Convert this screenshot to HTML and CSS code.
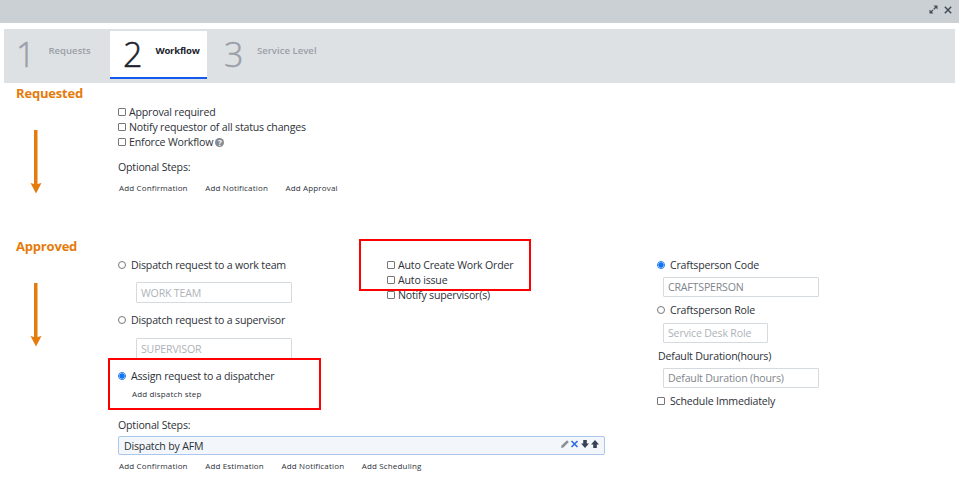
FILE: index.html
```
<!DOCTYPE html>
<html lang="en">
<head>
<meta charset="utf-8">
<title>Workflow</title>
<link rel="stylesheet" href="styles.css">
</head>
<body>
<header class="titlebar">
  <svg width="9" height="9" viewBox="0 0 9 9"><path d="M4.500 .5h4V4.500zM.5 4.500v4H4.500z" fill="#454d59"/><path d="M2 7l5-5" stroke="#454d59" stroke-width="1.300" stroke-dasharray="3 1 4"/></svg>
  <svg width="8" height="8" viewBox="0 0 8 8"><path d="M.8.8l6.400 6.400M7.200.8L.8 7.200" stroke="#454d59" stroke-width="1.500"/></svg>
</header>
<nav class="tabs">
  <div class="tab first"><span class="num">1</span><span class="name">Requests</span></div>
  <div class="tab active"><span class="num">2</span><span class="name">Workflow</span></div>
  <div class="tab last"><span class="num">3</span><span class="name">Service Level</span></div>
</nav>
<section class="stage requested">
  <h2>Requested</h2>
  <div class="body">
    <div class="rail"><svg width="12" height="64" viewBox="0 0 12 64"><path d="M4 0h3.500v54l4-1L6 63.500.5 53l3.500 1z" fill="#e57b0c"/></svg></div>
    <div class="main">
      <label class="check"><i class="cb"></i><span>Approval required</span></label>
      <label class="check"><i class="cb"></i><span>Notify requestor of all status changes</span></label>
      <label class="check"><i class="cb"></i><span>Enforce Workflow</span><b class="help">?</b></label>
      <p class="optional">Optional Steps:</p>
      <div class="links"><a>Add Confirmation</a><a>Add Notification</a><a>Add Approval</a></div>
    </div>
  </div>
</section>
<section class="stage approved">
  <h2>Approved</h2>
  <div class="body">
    <div class="rail"><svg width="12" height="64" viewBox="0 0 12 64"><path d="M4 0h3.500v54l4-1L6 63.500.5 53l3.500 1z" fill="#e57b0c"/></svg></div>
    <div class="main">
      <div class="dispatch">
        <div class="choices">
          <label class="radio"><i class="rb"></i><span>Dispatch request to a work team</span></label>
          <div class="field dim">WORK TEAM</div>
          <label class="radio"><i class="rb"></i><span>Dispatch request to a supervisor</span></label>
          <div class="field dim">SUPERVISOR</div>
          <label class="radio"><i class="rb on"></i><span>Assign request to a dispatcher</span></label>
          <div class="links step"><a>Add dispatch step</a></div>
        </div>
        <div class="auto">
          <label class="check"><i class="cb"></i><span>Auto Create Work Order</span></label>
          <label class="check"><i class="cb"></i><span>Auto issue</span></label>
          <label class="check"><i class="cb"></i><span>Notify supervisor(s)</span></label>
        </div>
      </div>
      <p class="optional">Optional Steps:</p>
      <div class="item"><span>Dispatch by AFM</span>
        <svg width="40" height="10" viewBox="0 0 40 10"><path d="M1 9l.6-2.500L7 1.200 8.800 3 3.400 8.400z" fill="#8b8f94"/><path d="M11.500 2l6 6M17.500 2l-6 6" stroke="#2c6ae8" stroke-width="1.600"/><path d="M23.200 1h3.600v3.500H29L25 9 21 4.500h2.200zM33.200 9h3.600V5.500H39L35 1 31 5.500h2.200z" fill="#394254"/></svg>
      </div>
      <div class="links"><a>Add Confirmation</a><a>Add Estimation</a><a>Add Notification</a><a>Add Scheduling</a></div>
    </div>
    <div class="craft">
      <label class="radio"><i class="rb on"></i><span>Craftsperson Code</span></label>
      <div class="field">CRAFTSPERSON</div>
      <label class="radio"><i class="rb"></i><span>Craftsperson Role</span></label>
      <div class="field dim role">Service Desk Role</div>
      <p class="duration">Default Duration(hours)</p>
      <div class="field">Default Duration (hours)</div>
      <label class="radio"><i class="cb"></i><span>Schedule Immediately</span></label>
    </div>
  </div>
</section>
<div class="mark mark-auto"></div>
<div class="mark mark-assign"></div>
</body>
</html>
```
FILE: styles.css
```
* { box-sizing: border-box; }
body { margin: 0; height: 491px; overflow: hidden; position: relative; background: #fff; color: #2d3138; font: 10.6px/15px "Open Sans", sans-serif; letter-spacing: -0.19px; white-space: nowrap; }
h2, p { margin: 0; }
svg { display: block; }
.titlebar { height: 23px; background: #cbd0d4; display: flex; justify-content: flex-end; align-items: center; gap: 6px; padding: 0 7px 4px 0; }
.tabs { height: 54px; margin: 6px 4px 0; background: #dde1e4; display: flex; color: #9b9fa8; letter-spacing: 0; }
.tab { display: flex; height: 48px; margin-top: 2px; }
.num { font-size: 34px; line-height: 46px; font-weight: 300; -webkit-text-stroke: 0.5px currentColor; }
.name { font-size: 9.5px; font-weight: 600; line-height: 40px; letter-spacing: 0.05px; }
.first { width: 106px; padding-left: 12px; }
.first .name { margin-left: 13px; }
.active { width: 97px; background: #fff; border-bottom: 2px solid #1558f0; color: #20232c; padding-left: 13px; }
.active .name { margin-left: 13px; font-weight: 700; letter-spacing: -0.2px; }
.last { padding-left: 17px; }
.last .name { margin-left: 13.5px; }
h2 { height: 21px; padding-left: 16px; font-size: 13px; line-height: 21px; font-weight: 700; color: #e57b0c; }
.requested { height: 153px; }
.body { display: flex; }
.rail { width: 118px; padding: 26px 0 0 30px; }
.main { width: 539px; }
.check, .radio { display: flex; align-items: center; height: 15.2px; }
.check span, .radio span { padding-top: 1px; }
.cb { width: 8px; height: 8px; border: 1px solid #777; border-radius: 1px; margin-right: 3px; }
.rb { width: 8px; height: 8px; border: 1px solid #777; border-radius: 50%; }
.rb.on { border-color: #1475f0; background: radial-gradient(#1475f0 0 2.4px, #fff 2.9px); }
.radio i { margin-right: 5px; }
.help { width: 9px; height: 9px; border-radius: 50%; background: #858a90; color: #fff; font-size: 8px; line-height: 9px; text-align: center; margin: 1px 0 0 2px; }
.optional { margin-top: 10px; height: 14px; }
.links { display: flex; gap: 17.5px; height: 12px; margin-top: 5px; padding-left: 1px; font-size: 8px; line-height: 12px; letter-spacing: 0.16px; }
.requested .links { margin-top: 8px; }
.dispatch { display: flex; height: 151px; }
.choices { width: 269px; }
.field { width: 156px; height: 20px; border: 1px solid #d5dade; border-radius: 1px; padding-left: 4px; line-height: 19px; color: #81868c; }
.dim { color: #aeb3b9; }
.choices .field { height: 21px; margin: 10px 0 9.6px 18px; line-height: 21px; }
.choices .step { margin-top: 4.5px; padding-left: 14px; }
.item { width: 487px; height: 19px; margin-top: 4px; border: 1px solid #abc8ec; border-radius: 2px; background: #f3f7fb; display: flex; justify-content: space-between; padding: 0 4px 0 5px; line-height: 18px; }
.item svg { margin-top: 2px; }
.craft .field { margin: 5px 0 5.5px 6px; }
.craft .role { width: 105px; }
.duration { height: 15px; padding-left: 1px; line-height: 16px; }
.mark { position: absolute; border: 2px solid #f00; }
.mark-auto { left: 359px; top: 239px; width: 172px; height: 52px; }
.mark-assign { left: 108px; top: 358px; width: 213px; height: 52px; }
```
